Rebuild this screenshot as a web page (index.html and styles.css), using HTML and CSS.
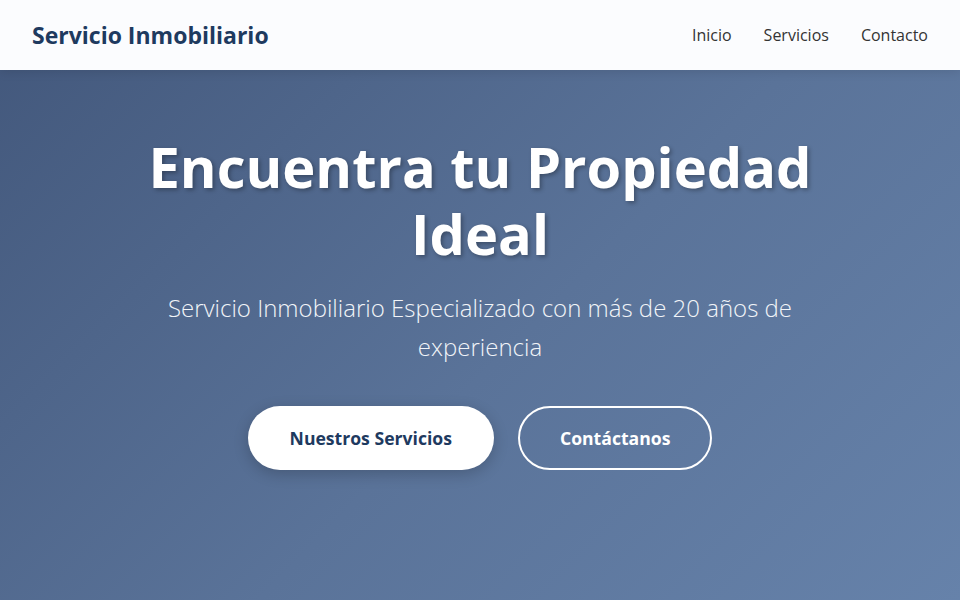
FILE: index.html
```html
<!DOCTYPE html>
<html lang="es">
<head>
<meta charset="utf-8">
<title>Servicio Inmobiliario</title>
<link rel="stylesheet" href="styles.css">
</head>
<body>
<header class="site-header">
  <div class="logo">Servicio Inmobiliario</div>
  <nav class="nav">
    <a href="#" class="nav-link">Inicio</a>
    <a href="#" class="nav-link">Servicios</a>
    <a href="#" class="nav-link">Contacto</a>
  </nav>
</header>
<section class="hero">
  <div class="hero-content">
    <h1 class="hero-title">Encuentra tu Propiedad Ideal</h1>
    <p class="hero-subtitle">Servicio Inmobiliario Especializado con más de 20 años de experiencia</p>
    <div class="hero-actions">
      <a href="#" class="btn btn-primary">Nuestros Servicios</a>
      <a href="#" class="btn btn-outline">Contáctanos</a>
    </div>
  </div>
</section>
</body>
</html>
```
FILE: styles.css
```css
* { box-sizing: border-box; }
html, body { margin: 0; padding: 0; }
body {
  font-family: "Open Sans", "Noto Sans", sans-serif;
  height: 600px;
  overflow: hidden;
  background: linear-gradient(135deg, #42577b 0%, #5a7399 55%, #6682aa 100%);
}
.site-header {
  position: relative;
  z-index: 2;
  height: 70px;
  padding: 0 32px;
  display: flex;
  align-items: center;
  justify-content: space-between;
  background: #fbfcfe;
  box-shadow: 0 2px 10px rgba(0,0,0,0.1);
}
.logo {
  font-size: 23px;
  font-weight: 700;
  color: #1e3a5f;
}
.nav { display: flex; gap: 32px; }
.nav-link {
  color: #333;
  text-decoration: none;
  font-size: 16px;
}
.hero {
  height: 530px;
  display: flex;
  justify-content: center;
  padding-top: 63px;
}
.hero-content {
  max-width: 800px;
  text-align: center;
  display: flex;
  flex-direction: column;
  align-items: center;
}
.hero-title {
  margin: 0;
  font-size: 56px;
  line-height: 67px;
  font-weight: 700;
  color: #fff;
  text-shadow: 2px 2px 4px rgba(0,0,0,0.3);
}
.hero-subtitle {
  margin: 21px 0 0;
  max-width: 660px;
  font-size: 24px;
  line-height: 39px;
  font-weight: 300;
  color: #f1f4f8;
}
.hero-actions {
  margin-top: 40px;
  display: flex;
  gap: 24px;
}
.btn {
  display: inline-block;
  border-radius: 50px;
  font-size: 17.6px;
  line-height: 28px;
  font-weight: 700;
  text-decoration: none;
}
.btn-primary {
  padding: 18px 42px;
  background: #fff;
  color: #1e3a5f;
  box-shadow: 0 4px 15px rgba(0,0,0,0.2);
}
.btn-outline {
  padding: 16px 40px;
  border: 2px solid #fff;
  color: #fff;
}
```
